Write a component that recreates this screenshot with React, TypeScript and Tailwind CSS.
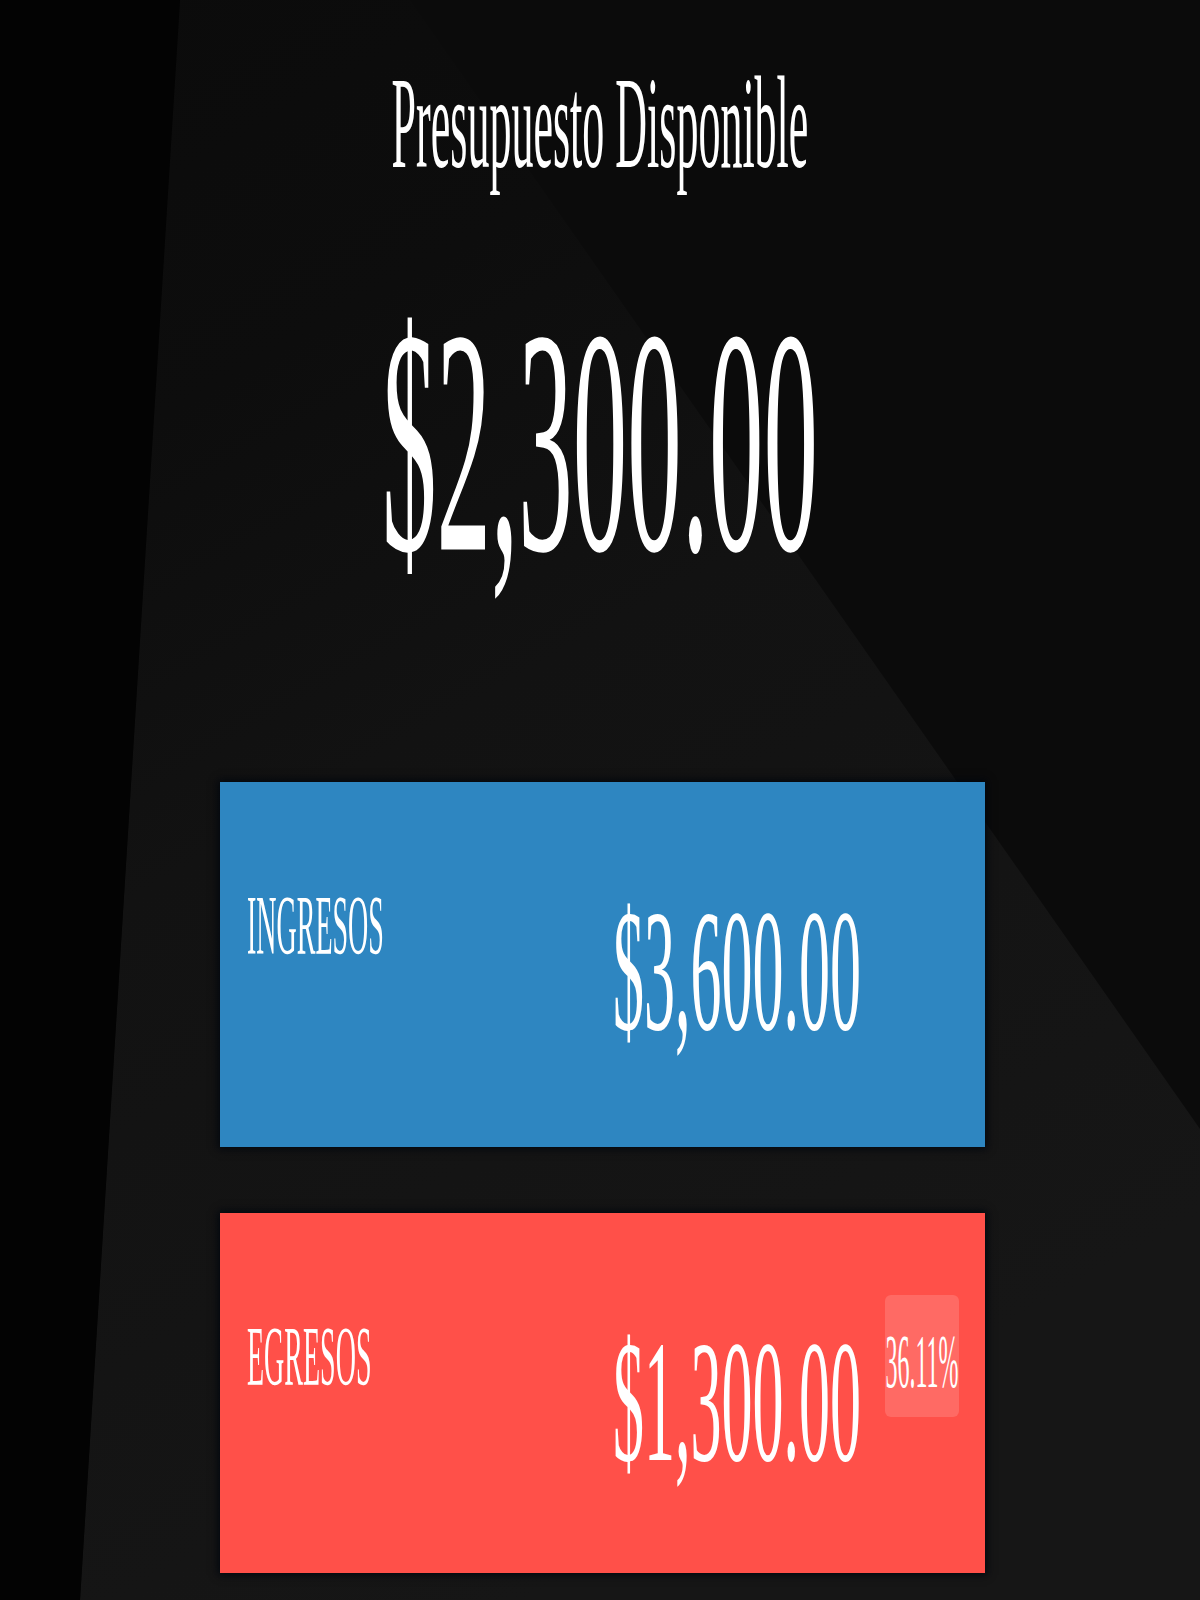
import React from "react"

// the reference renders its serif text stretched tall, so each text run is scaled on y
const Tall = ({
  children,
  className,
}: {
  children: React.ReactNode
  className: string
}) => <span className={`inline-block origin-top leading-none whitespace-nowrap ${className}`}>{children}</span>

const Backdrop = () => (
  <svg
    className="absolute inset-0 h-full w-full"
    viewBox="0 0 1200 1600"
    preserveAspectRatio="none"
  >
    <defs>
      <linearGradient id="lit" x1="0" y1="0" x2="0.4" y2="1">
        <stop offset="0" stopColor="#0b0b0b" />
        <stop offset="0.25" stopColor="#0d0d0d" />
        <stop offset="0.5" stopColor="#121212" />
        <stop offset="1" stopColor="#161616" />
      </linearGradient>
    </defs>
    <rect width="1200" height="1600" fill="#0b0b0b" />
    <polygon points="180,0 410,0 1200,1129 1200,1600 80,1600" fill="url(#lit)" />
    <polygon points="0,0 180,0 80,1600 0,1600" fill="#030303" />
  </svg>
)

type CardProps = {
  label: string
  amount: string
  color: string
  height: string
  percent?: string
}

const Card = ({ label, amount, color, height, percent }: CardProps) => (
  <div
    className={`ml-[5px] flex w-[765px] items-start pt-[82px] pl-[27px] pr-[26px] shadow-[0_0_8px_2px_rgba(0,6,14,0.95)] ${color} ${height}`}
  >
    <div className="mt-[21px] h-[84px]">
      <Tall className="scale-y-[3] text-[28px]">{label}</Tall>
    </div>
    <div className="flex-1" />
    <div className="mt-[19px] h-[174px] w-[248px]">
      <Tall className="scale-y-[2.8] text-[62px]">{amount}</Tall>
    </div>
    <div
      className={`ml-[24px] h-[122px] w-[74px] overflow-hidden rounded-md pt-[28px] text-center ${
        percent ? "bg-white/15" : ""
      }`}
    >
      {percent && <Tall className="scale-y-[3.2] text-[24px]">{percent}</Tall>}
    </div>
  </div>
)

const App = () => {
  return (
    <main className="relative h-[1600px] w-[1200px] overflow-hidden font-['Liberation_Serif',serif] text-white">
      <Backdrop />
      <div className="relative flex flex-col items-center">
        <div className="mt-[59px] h-[132px]">
          <Tall className="scale-y-[3] text-[44px]">Presupuesto Disponible</Tall>
        </div>
        <div className="mt-[91px] h-[318px]">
          <Tall className="scale-y-[2.94] text-[109px]">$2,300.00</Tall>
        </div>
        <div className="mt-[182px]" />
        <Card label="INGRESOS" amount="$3,600.00" color="bg-[#2e86c1]" height="h-[365px]" />
        <div className="h-[66px]" />
        <Card
          label="EGRESOS"
          amount="$1,300.00"
          color="bg-[#ff5049]"
          height="h-[360px]"
          percent="36.11%"
        />
      </div>
    </main>
  )
}

export default App
